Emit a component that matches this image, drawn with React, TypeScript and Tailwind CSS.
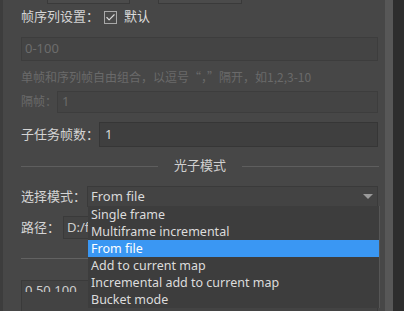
import { Check } from 'lucide-react'

const modes = [
	'Single frame',
	'Multiframe incremental',
	'From file',
	'Add to current map',
	'Incremental add to current map',
	'Bucket mode',
]

export default function App() {
	const selected = 'From file'

	return (
		<div
			className="flex w-[404px] h-[311px] overflow-hidden bg-[#474747] text-[13px] text-[#d4d4d4]"
			style={{ fontFamily: '"Noto Sans", "Noto Sans CJK SC", sans-serif' }}
		>
			<div className="flex-1 flex flex-col border-l-[3px] border-[#3d3d3d] pl-[18px] pr-[7px]">

				{/* bottoms of the buttons above */}
				<div className="flex h-[4px] shrink-0">
					<div className="ml-[26px] w-[83px] h-[4px] bg-[#4b4b4b] border border-t-0 border-[#3a3a3a]" />
					<div className="ml-[28px] w-[84px] h-[4px] bg-[#4b4b4b] border border-t-0 border-[#3a3a3a]" />
				</div>

				<div className="flex items-center h-[26px] shrink-0">
					<span className="whitespace-nowrap">帧序列设置：</span>
					<span className="ml-[5px] w-[13px] h-[13px] border border-[#a8a8a8] bg-[#4a4a4a] flex items-center justify-center">
						<Check size={11} strokeWidth={2.5} className="text-[#d8d8d8]" />
					</span>
					<span className="ml-[7px] text-[#dcdcdc]">默认</span>
				</div>

				<div className="mt-[7px] h-[24px] shrink-0 border border-[#3d3d3d] bg-[#444444] flex items-center px-[3px] text-[#6c6c6c]">
					0-100
				</div>

				<div
					className="mt-[8px] h-[16px] leading-[16px] text-[12px] text-[#6a6a6a] whitespace-nowrap"
					style={{ fontFamily: '"Noto Sans CJK SC", sans-serif' }}
				>
					单帧和序列帧自由组合，以逗号“，”隔开，如1,2,3-10
				</div>

				<div className="mt-[6px] flex items-center h-[22px] shrink-0">
					<span className="w-[36px] shrink-0 whitespace-nowrap text-[12px] text-[#6a6a6a]">隔帧：</span>
					<div className="flex-1 h-full border border-[#3d3d3d] bg-[#444444] flex items-center px-[4px] text-[#6a6a6a]">1</div>
				</div>

				<div className="mt-[9px] flex items-center h-[25px] shrink-0">
					<span className="w-[78px] shrink-0 whitespace-nowrap">子任务帧数：</span>
					<div className="flex-1 h-full border border-[#363636] bg-[#3f3f3f] flex items-center px-[5px] text-[#dadada]">1</div>
				</div>

				<div className="mt-[9px] flex items-center h-[20px] shrink-0 gap-[16px]">
					<div className="flex-1 h-px bg-[#5e5e5e]" />
					<span className="text-[#d0d0d0]">光子模式</span>
					<div className="flex-1 h-px bg-[#5e5e5e] -mr-px" />
				</div>

				<div className="mt-[10px] flex items-center h-[21px] shrink-0">
					<span className="w-[66px] shrink-0 whitespace-nowrap">选择模式：</span>
					<div className="relative flex-1 h-full border border-[#3a3a3a] bg-[#434343] flex items-center px-[3px] text-[#dadada]">
						<span>{selected}</span>
						<svg className="absolute right-[4px] top-[7px]" width="10" height="5" viewBox="0 0 10 5">
							<path d="M0 0 H10 L5 5 Z" fill="#9a9a9a" />
						</svg>

						<div className="absolute left-0 top-[19px] w-[292px] bg-[#3d3d3d] border-r border-[#565656] z-10 text-[12.5px]">
							{modes.map(m => (
								<div
									key={m}
									className={
										m === selected
											? 'h-[17px] leading-[17px] px-[3px] bg-[#3a97f3] text-white whitespace-nowrap'
											: 'h-[17px] leading-[17px] px-[3px] text-[#dcdcdc] whitespace-nowrap'
									}
								>
									{m}
								</div>
							))}
						</div>
					</div>
				</div>

				<div className="mt-[9px] flex items-center h-[23px] shrink-0">
					<span className="w-[42px] shrink-0 whitespace-nowrap">路径：</span>
					<div className="flex-1 h-full border border-[#3a3a3a] bg-[#434343] flex items-center px-[3px] text-[#cfcfcf] overflow-hidden">
						<span className="w-[22px] overflow-hidden whitespace-nowrap">D:/f</span>
					</div>
				</div>

				<div className="mt-[19px] h-px bg-[#626262] shrink-0" />

				<div className="mt-[21px] h-[40px] shrink-0 border border-[#3a3a3a] bg-[#434343] px-[3px] pt-[2px]">
					<div className="h-[9px] overflow-hidden text-[#cfcfcf] leading-[14px]">0,50,100</div>
				</div>
			</div>

			<div className="w-[8px] bg-[#575757]" />
			<div className="w-[11px] bg-[#2d2d2d]" />
		</div>
	)
}
